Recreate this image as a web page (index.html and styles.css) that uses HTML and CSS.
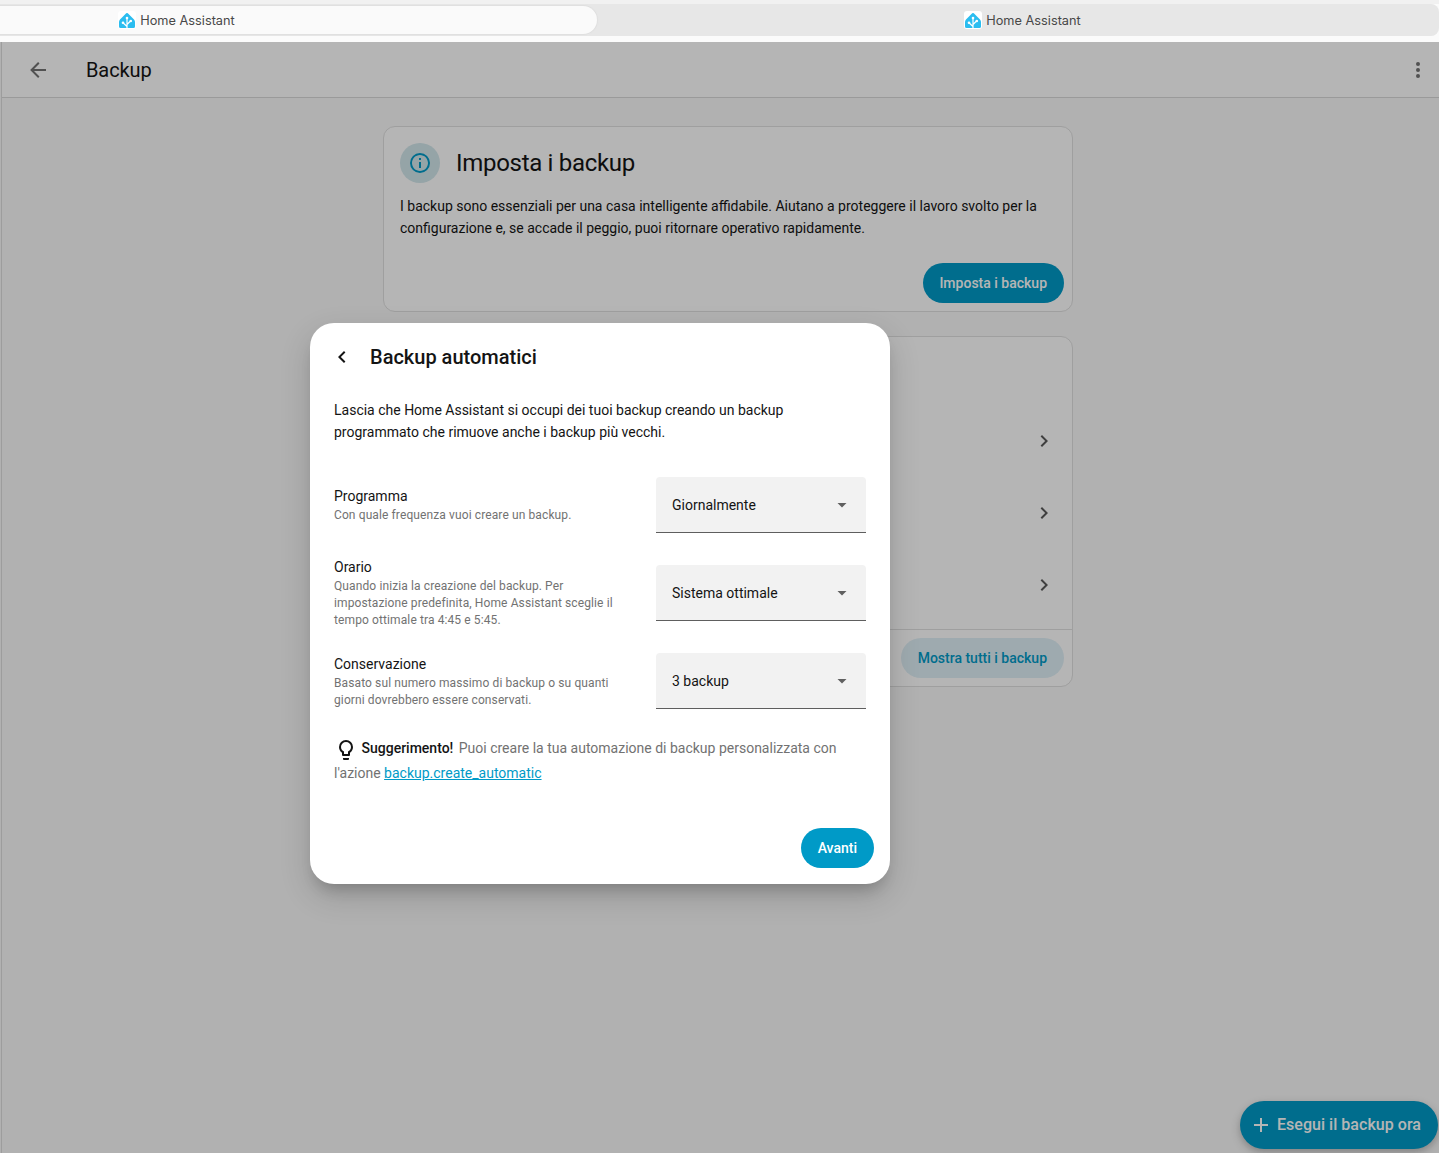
FILE: index.html
```
<!DOCTYPE html>
<html lang="it">
<head>
    <meta charset="UTF-8">
    <meta name="viewport" content="width=device-width, initial-scale=1.0">
    <title>Backup - Home Assistant</title>
    <link rel="stylesheet" href="styles.css">
</head>
<body>
    <div class="browser-bar">
        <div class="tabs">
            <div class="tab active">
                <svg class="favicon" viewBox="0 0 18 18"><rect width="18" height="18" rx="3" fill="#fff"/><path d="M8.2 2.3Q9 1.5 9.8 2.3L16 8.5Q17 9.5 17 11V15.5Q17 17 15.5 17H2.5Q1 17 1 15.5V11Q1 9.5 2 8.5Z" fill="#2bbdf0"/><path d="M9 17V7M9 15.5L5 11.8M9 13.5L12.8 9.8" stroke="#fff" stroke-width="1.2" fill="none"/><circle cx="9" cy="7" r="1.3" fill="#fff"/><circle cx="5" cy="11.8" r="1.3" fill="#fff"/><circle cx="12.8" cy="10" r="1.3" fill="#fff"/></svg>
                <span>Home Assistant</span>
            </div>
            <div class="tab">
                <svg class="favicon" viewBox="0 0 18 18"><rect width="18" height="18" rx="3" fill="#fff"/><path d="M8.2 2.3Q9 1.5 9.8 2.3L16 8.5Q17 9.5 17 11V15.5Q17 17 15.5 17H2.5Q1 17 1 15.5V11Q1 9.5 2 8.5Z" fill="#2bbdf0"/><path d="M9 17V7M9 15.5L5 11.8M9 13.5L12.8 9.8" stroke="#fff" stroke-width="1.2" fill="none"/><circle cx="9" cy="7" r="1.3" fill="#fff"/><circle cx="5" cy="11.8" r="1.3" fill="#fff"/><circle cx="12.8" cy="10" r="1.3" fill="#fff"/></svg>
                <span>Home Assistant</span>
            </div>
        </div>
    </div>

    <div class="app">
        <header class="toolbar">
            <svg class="icon" viewBox="0 0 24 24"><path d="M20 11V13H8L13.5 18.5L12.08 19.92L4.16 12L12.08 4.08L13.5 5.5L8 11H20Z"/></svg>
            <h1>Backup</h1>
            <svg class="icon" viewBox="0 0 24 24"><path d="M12 16A2 2 0 0 1 14 18A2 2 0 0 1 12 20A2 2 0 0 1 10 18A2 2 0 0 1 12 16M12 10A2 2 0 0 1 14 12A2 2 0 0 1 12 14A2 2 0 0 1 10 12A2 2 0 0 1 12 10M12 4A2 2 0 0 1 14 6A2 2 0 0 1 12 8A2 2 0 0 1 10 6A2 2 0 0 1 12 4Z"/></svg>
        </header>

        <main class="content">
            <section class="card summary">
                <div class="summary-header">
                    <div class="badge">
                        <svg class="icon" viewBox="0 0 24 24"><path d="M11 9H13V7H11M12 20C7.59 20 4 16.41 4 12S7.59 4 12 4 20 7.59 20 12 16.41 20 12 20M12 2A10 10 0 0 0 2 12A10 10 0 0 0 12 22A10 10 0 0 0 22 12A10 10 0 0 0 12 2M11 17H13V11H11V17Z"/></svg>
                    </div>
                    <h2>Imposta i backup</h2>
                </div>
                <p>I backup sono essenziali per una casa intelligente affidabile. Aiutano a proteggere il lavoro svolto per la configurazione e, se accade il peggio, puoi ritornare operativo rapidamente.</p>
                <div class="card-actions">
                    <button class="btn">Imposta i backup</button>
                </div>
            </section>

            <section class="card list">
                <div class="rows">
                    <div class="row"><svg class="icon" viewBox="0 0 24 24"><path d="M8.59 16.58L13.17 12L8.59 7.41L10 6L16 12L10 18L8.59 16.58Z"/></svg></div>
                    <div class="row"><svg class="icon" viewBox="0 0 24 24"><path d="M8.59 16.58L13.17 12L8.59 7.41L10 6L16 12L10 18L8.59 16.58Z"/></svg></div>
                    <div class="row"><svg class="icon" viewBox="0 0 24 24"><path d="M8.59 16.58L13.17 12L8.59 7.41L10 6L16 12L10 18L8.59 16.58Z"/></svg></div>
                </div>
                <div class="card-actions">
                    <button class="btn light">Mostra tutti i backup</button>
                </div>
            </section>
        </main>

        <button class="fab">
            <svg class="icon" viewBox="0 0 24 24"><path d="M19 13H13V19H11V13H5V11H11V5H13V11H19V13Z"/></svg>
            <span>Esegui il backup ora</span>
        </button>

        <div class="scrim"></div>

        <div class="dialog">
            <div class="dialog-header">
                <svg class="icon" viewBox="0 0 24 24"><path d="M15.41 16.58L10.83 12L15.41 7.41L14 6L8 12L14 18L15.41 16.58Z"/></svg>
                <h2>Backup automatici</h2>
            </div>
            <p class="intro">Lascia che Home Assistant si occupi dei tuoi backup creando un backup programmato che rimuove anche i backup più vecchi.</p>
            <div class="settings">
                <div class="setting">
                    <div class="label">
                        <div class="name">Programma</div>
                        <div class="desc">Con quale frequenza vuoi creare un backup.</div>
                    </div>
                    <div class="select">
                        <span>Giornalmente</span>
                        <svg class="icon" viewBox="0 0 24 24"><path d="M7.5 10L12 14.5L16.5 10Z"/></svg>
                    </div>
                </div>
                <div class="setting">
                    <div class="label">
                        <div class="name">Orario</div>
                        <div class="desc">Quando inizia la creazione del backup. Per impostazione predefinita, Home Assistant sceglie il tempo ottimale tra 4:45 e 5:45.</div>
                    </div>
                    <div class="select">
                        <span>Sistema ottimale</span>
                        <svg class="icon" viewBox="0 0 24 24"><path d="M7.5 10L12 14.5L16.5 10Z"/></svg>
                    </div>
                </div>
                <div class="setting">
                    <div class="label">
                        <div class="name">Conservazione</div>
                        <div class="desc">Basato sul numero massimo di backup o su quanti giorni dovrebbero essere conservati.</div>
                    </div>
                    <div class="select">
                        <span>3 backup</span>
                        <svg class="icon" viewBox="0 0 24 24"><path d="M7.5 10L12 14.5L16.5 10Z"/></svg>
                    </div>
                </div>
            </div>
            <p class="tip">
                <svg class="icon" viewBox="0 0 24 24"><path d="M12 2A7 7 0 0 1 19 9C19 11.38 17.81 13.47 16 14.74V17A1 1 0 0 1 15 18H9A1 1 0 0 1 8 17V14.74C6.19 13.47 5 11.38 5 9A7 7 0 0 1 12 2M9 21V20H15V21A1 1 0 0 1 14 22H10A1 1 0 0 1 9 21M12 4A5 5 0 0 0 7 9C7 11.05 8.23 12.81 10 13.58V16H14V13.58C15.77 12.81 17 11.05 17 9A5 5 0 0 0 12 4Z"/></svg><b>Suggerimento!</b>
                Puoi creare la tua automazione di backup personalizzata con l'azione <a href="#">backup.create_automatic</a>
            </p>
            <div class="dialog-actions">
                <button class="btn">Avanti</button>
            </div>
        </div>
    </div>
</body>
</html>
```

FILE: styles.css
```
* {
    box-sizing: border-box;
}

body {
    margin: 0;
    height: 100vh;
    display: flex;
    flex-direction: column;
    overflow: hidden;
    font-family: Roboto, "Liberation Sans", sans-serif;
    font-size: 14px;
    color: #141414;
}

h1, h2, p {
    margin: 0;
    font-weight: 400;
}

.icon {
    width: 24px;
    height: 24px;
    fill: currentColor;
    flex-shrink: 0;
}

/* browser tabs */
.browser-bar {
    height: 42px;
    flex-shrink: 0;
    padding-top: 4px;
    background: linear-gradient(#f1f1f1 0, #f1f1f1 4px, #fbfbfb 4px);
}

.tabs {
    display: flex;
    height: 32px;
    padding: 2px 0;
    background: #e7e7e7;
    border-radius: 0 8px 8px 0;
}

.tab {
    flex: 1;
    display: flex;
    align-items: center;
    justify-content: center;
    gap: 4px;
    padding-left: 9px;
    font-family: Inter, sans-serif;
    font-size: 12.75px;
    color: #484848;
}

.tab.active {
    flex: 0 0 597px;
    padding: 0 244px 0 0;
    background: #fafafa;
    border-radius: 0 14px 14px 0;
    box-shadow: 0 0 1px 1px #dfdfdf;
}

.favicon {
    width: 18px;
    height: 18px;
}

/* page */
.app {
    position: relative;
    flex: 1;
    min-height: 0;
    background: #fafafa;
    box-shadow: inset 1px 0 #fafafa, inset 2px 0 #dedede;
}

.toolbar {
    display: flex;
    align-items: center;
    height: 56px;
    margin-left: 2px;
    padding: 0 9px 0 24px;
    background: #fff;
    border-bottom: 1px solid #dadada;
    color: #727272;
}

.toolbar h1 {
    flex: 1;
    margin-left: 36px;
    font-size: 20px;
    letter-spacing: -0.1px;
    color: #141414;
}

.content {
    display: flex;
    flex-direction: column;
    gap: 24px;
    width: 690px;
    margin: 28px 0 0 383px;
}

.card {
    background: #fff;
    border: 1px solid #e0e0e0;
    border-radius: 12px;
}

.summary {
    display: flex;
    flex-direction: column;
    height: 186px;
}

.summary-header {
    display: flex;
    align-items: center;
    gap: 16px;
    padding: 16px 16px 0;
}

.badge {
    display: flex;
    align-items: center;
    justify-content: center;
    width: 40px;
    height: 40px;
    border-radius: 50%;
    background: #d2e7ec;
    color: #009ac7;
}

.summary h2 {
    font-size: 24px;
    letter-spacing: -0.3px;
}

.summary p {
    padding: 12px 16px 0;
    line-height: 22px;
}

.card-actions {
    display: flex;
    justify-content: flex-end;
    margin-top: auto;
    padding: 8px;
}

.btn {
    height: 40px;
    padding: 0 17px 0 16.5px;
    border: none;
    border-radius: 20px;
    background: #009ac7;
    color: #fff;
    font: 500 14px Roboto, sans-serif;
    cursor: pointer;
}

.btn.light {
    background: #dff0f7;
    color: #009ac7;
}

.list {
    display: flex;
    flex-direction: column;
    height: 351px;
}

.rows {
    padding-top: 68px;
}

.row {
    display: flex;
    align-items: center;
    justify-content: flex-end;
    height: 72px;
    padding-right: 16px;
    color: #5a5a5a;
}

.list .card-actions {
    border-top: 1px solid #e0e0e0;
}

.fab {
    position: absolute;
    right: 1px;
    bottom: 4px;
    display: flex;
    align-items: center;
    gap: 4px;
    height: 48px;
    padding: 0 17px 1px 9px;
    border: none;
    border-radius: 24px;
    background: #009ac7;
    color: #fff;
    font: 500 16px Roboto, sans-serif;
    letter-spacing: 0.04px;
    box-shadow: 0 3px 6px rgba(0, 0, 0, 0.16), 0 4px 14px rgba(0, 0, 0, 0.12);
}

.scrim {
    position: absolute;
    inset: 0;
    background: rgba(0, 0, 0, 0.29);
}

/* dialog */
.dialog {
    position: absolute;
    top: 281px;
    left: 310px;
    display: flex;
    flex-direction: column;
    width: 580px;
    height: 561px;
    background: #fff;
    border-radius: 24px;
    box-shadow: 0 11px 15px -7px rgba(0, 0, 0, 0.2), 0 12px 30px 2px rgba(0, 0, 0, 0.14);
}

.dialog-header {
    display: flex;
    align-items: center;
    gap: 16px;
    height: 68px;
    padding-left: 20px;
}

.dialog-header h2 {
    font-size: 20px;
    font-weight: 500;
}

.intro {
    width: 500px;
    padding: 8px 0 0 24px;
    line-height: 22px;
}

.settings {
    display: flex;
    flex-direction: column;
    gap: 16px;
    padding: 26px 24px 0;
}

.setting {
    display: flex;
    align-items: center;
    justify-content: space-between;
    height: 72px;
}

.label {
    width: 290px;
}

.name {
    margin-bottom: 1px;
    line-height: 20px;
}

.desc {
    font-size: 12px;
    line-height: 17px;
    letter-spacing: 0.11px;
    color: #727272;
}

.select {
    display: flex;
    align-items: center;
    justify-content: space-between;
    width: 210px;
    height: 56px;
    padding: 0 12px 0 16px;
    background: #f2f2f2;
    border-bottom: 1px solid #5e5e5e;
    border-radius: 4px 4px 0 0;
}

.select .icon {
    color: #606060;
}

.tip {
    padding: 19px 24px 0;
    line-height: 25px;
    color: #727272;
}

.tip .icon {
    margin: 1px 0 -1px;
    color: #141414;
    vertical-align: middle;
}

.tip b {
    margin: 0 2px 0 3.5px;
    font-weight: 500;
    color: #141414;
}

.tip a {
    color: #009ac7;
}

.dialog-actions {
    display: flex;
    justify-content: flex-end;
    margin-top: auto;
    padding: 16px;
}
```
